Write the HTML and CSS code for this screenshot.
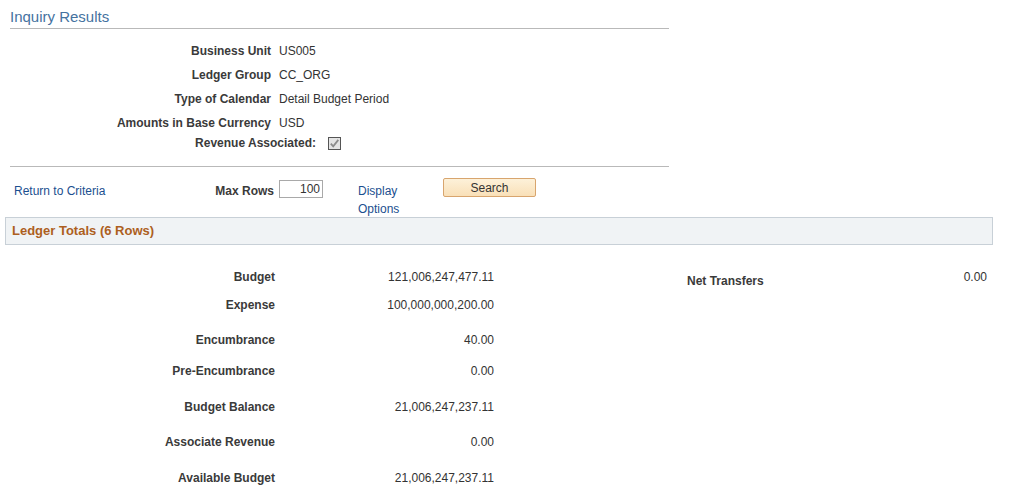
FILE: index.html
```html
<!DOCTYPE html>
<html>
<head>
<meta charset="utf-8">
<title>Inquiry Results</title>
<link rel="stylesheet" href="styles.css">
</head>
<body>
<div class="page">
  <div class="header">
    <h1 class="title">Inquiry Results</h1>
  </div>

  <div class="info">
    <div class="info-grid">
      <div class="lbl">Business Unit</div><div class="val">US005</div>
      <div class="lbl">Ledger Group</div><div class="val">CC_ORG</div>
      <div class="lbl">Type of Calendar</div><div class="val">Detail Budget Period</div>
      <div class="lbl">Amounts in Base Currency</div><div class="val">USD</div>
    </div>
    <div class="rev-row">
      <div class="rev-lbl">Revenue Associated:</div>
      <span class="checkbox">
        <svg width="13" height="13" viewBox="0 0 13 13">
          <rect x="0.5" y="0.5" width="12" height="12" fill="#e4e4e4" stroke="#555"/>
          <path d="M2.8 6.6 L5.2 9.3 L10.3 2.9" fill="none" stroke="#8c8c8c" stroke-width="1.8"/>
        </svg>
      </span>
    </div>
  </div>

  <div class="toolbar">
    <a class="link crit" href="#">Return to Criteria</a>
    <div class="maxlbl">Max Rows</div>
    <input class="maxin" type="text" value="100">
    <a class="link disp" href="#">Display<br>Options</a>
    <button class="btn" type="button">Search</button>
  </div>

  <div class="bar">Ledger Totals (6 Rows)</div>

  <div class="totals">
    <div class="left">
      <div class="row first"><div class="tl">Budget</div><div class="tv">121,006,247,477.11</div></div>
      <div class="row g12"><div class="tl">Expense</div><div class="tv">100,000,000,200.00</div></div>
      <div class="row g19"><div class="tl">Encumbrance</div><div class="tv">40.00</div></div>
      <div class="row g15"><div class="tl">Pre-Encumbrance</div><div class="tv">0.00</div></div>
      <div class="row g20"><div class="tl">Budget Balance</div><div class="tv">21,006,247,237.11</div></div>
      <div class="row g19"><div class="tl">Associate Revenue</div><div class="tv">0.00</div></div>
      <div class="row g20"><div class="tl">Available Budget</div><div class="tv">21,006,247,237.11</div></div>
    </div>
    <div class="right">
      <div class="nl">Net Transfers</div>
      <div class="nv">0.00</div>
    </div>
  </div>
</div>
</body>
</html>
```

FILE: styles.css
```css
html, body {
  margin: 0;
  padding: 0;
  background: #fff;
}
body {
  font-family: "Liberation Sans", Arial, sans-serif;
  font-size: 12px;
  color: #333;
}
.page {
  width: 1026px;
}
.header {
  margin: 0 0 0 10px;
  width: 659px;
  border-bottom: 1px solid #b9b9b9;
  padding-top: 8px;
  padding-bottom: 2px;
}
.title {
  margin: 0;
  font-size: 15px;
  line-height: 18px;
  font-weight: normal;
  color: #45729f;
}
.info {
  margin-left: 10px;
  width: 659px;
  padding-top: 10px;
  padding-bottom: 15px;
  border-bottom: 1px solid #b9b9b9;
}
.info-grid {
  display: grid;
  grid-template-columns: 261px auto;
  column-gap: 8px;
  grid-auto-rows: 24px;
  align-items: center;
}
.lbl {
  text-align: right;
  font-weight: bold;
  color: #3a3a3a;
  line-height: 16px;
}
.val {
  line-height: 16px;
  color: #333;
}
.rev-row {
  display: flex;
  align-items: center;
  height: 16px;
}
.rev-lbl {
  width: 306px;
  text-align: right;
  font-weight: bold;
  color: #3a3a3a;
  line-height: 16px;
}
.checkbox {
  display: block;
  margin-left: 12px;
  width: 13px;
  height: 13px;
}
.checkbox svg {
  display: block;
}
.toolbar {
  display: flex;
  align-items: flex-start;
  padding-left: 14px;
  padding-top: 11px;
  height: 39px;
  box-sizing: content-box;
}
.link {
  color: #1b4f8f;
  text-decoration: none;
  line-height: 18px;
  margin-top: 4px;
}
.crit {
  width: 160px;
}
.maxlbl {
  width: 100px;
  text-align: right;
  font-weight: bold;
  color: #3a3a3a;
  line-height: 18px;
  margin-top: 4px;
}
.maxin {
  margin: 2px 0 0 5px;
  width: 44px;
  height: 18px;
  box-sizing: border-box;
  border: 1px solid #a9a9a9;
  padding: 0 2px 0 0;
  text-align: right;
  font-family: "Liberation Sans", Arial, sans-serif;
  font-size: 12px;
  color: #333;
  background: #fff;
}
.disp {
  margin-left: 35px;
  width: 85px;
}
.btn {
  width: 93px;
  height: 19px;
  box-sizing: border-box;
  padding: 0;
  border: 1px solid #d8a56e;
  border-radius: 2px;
  background: linear-gradient(#fdf1d9, #f9e0b8);
  font-family: "Liberation Sans", Arial, sans-serif;
  font-size: 12px;
  color: #333;
  line-height: 16px;
}
.bar {
  margin-left: 5px;
  width: 988px;
  height: 28px;
  box-sizing: border-box;
  border: 1px solid #c8d0d7;
  background: #f0f3f5;
  padding-left: 6px;
  font-size: 13px;
  font-weight: bold;
  color: #ad5f1e;
  line-height: 26px;
}
.totals {
  display: flex;
  align-items: flex-start;
}
.left {
  display: flex;
  flex-direction: column;
  padding-top: 24px;
}
.row {
  display: flex;
  line-height: 16px;
}
.g12 { margin-top: 12px; }
.g15 { margin-top: 15px; }
.g19 { margin-top: 19px; }
.g20 { margin-top: 20px; }
.tl {
  width: 275px;
  text-align: right;
  font-weight: bold;
  color: #3a3a3a;
}
.tv {
  width: 219px;
  text-align: right;
  color: #333;
}
.right {
  display: flex;
  align-items: flex-start;
  margin-left: 193px;
  width: 300px;
  padding-top: 24px;
  line-height: 16px;
}
.nl {
  margin-top: 4px;
  font-weight: bold;
  color: #3a3a3a;
}
.nv {
  margin-left: auto;
  color: #333;
}
```
